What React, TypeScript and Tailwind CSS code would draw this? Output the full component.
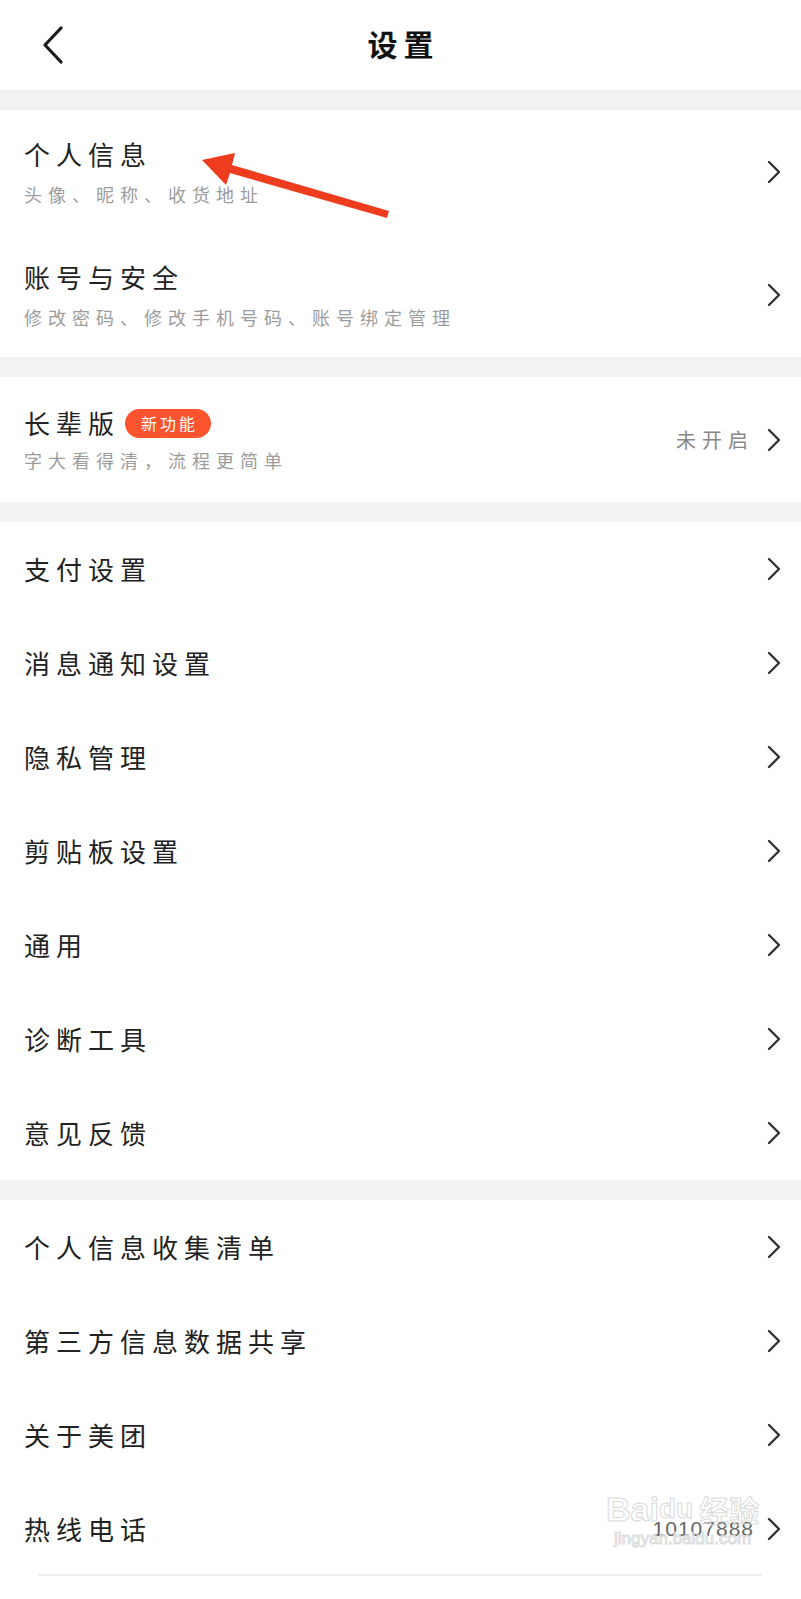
import React from 'react'

const font = "font-['Noto_Sans_CJK_SC','Noto_Sans',sans-serif]"

const Chevron = () => (
  <svg width="16" height="24" viewBox="0 0 16 24" fill="none" className="shrink-0">
    <path d="M3 2 L13 12 L3 22" stroke="#333" strokeWidth="2.4" strokeLinecap="round" strokeLinejoin="round" />
  </svg>
)

const Gap = () => <div className="h-[20px] bg-[#f3f3f3]" />

const Row = ({ title, right }: { title: string; right?: React.ReactNode }) => (
  <div className="h-[94px] flex items-center justify-between pl-[24px] pr-[19px]">
    <span className="text-[26px] leading-[26px] tracking-[6px] text-[#222]">{title}</span>
    <div className="flex items-center gap-3">
      {right}
      <Chevron />
    </div>
  </div>
)

const DetailRow = ({
  title,
  sub,
  badge,
  right,
  h,
  gap,
}: {
  title: string
  sub: string
  badge?: string
  right?: string
  h: string
  gap: string
}) => (
  <div className={`${h} flex items-center justify-between pl-[24px] pr-[19px]`}>
    <div className={`flex flex-col ${gap}`}>
      <div className="flex items-center h-[26px]">
        <span className="text-[26px] leading-[26px] tracking-[6px] text-[#222]">{title}</span>
        {badge && (
          <span className="h-[29px] pl-[16px] pr-[13px] ml-[5px] rounded-full bg-[#fd5430] text-white text-[16px] leading-[29px] tracking-[3px]">
            {badge}
          </span>
        )}
      </div>
      <span className="text-[18px] leading-[18px] tracking-[6px] text-[#9c9c9c]">{sub}</span>
    </div>
    <div className="flex items-center gap-3">
      {right && <span className="text-[20px] tracking-[6px] text-[#888]">{right}</span>}
      <Chevron />
    </div>
  </div>
)

const App = () => {
  const generalItems = ['支付设置', '消息通知设置', '隐私管理', '剪贴板设置', '通用', '诊断工具', '意见反馈']

  return (
    <div className={`relative w-[801px] h-[1599px] overflow-hidden bg-white ${font}`}>
      {/* header */}
      <div className="h-[90px] flex items-center relative">
        <div className="pl-[42px]">
          <svg width="22" height="38" viewBox="0 0 22 38" fill="none">
            <path d="M19 2 L3 19 L19 36" stroke="#1a1a1a" strokeWidth="3.2" strokeLinecap="round" strokeLinejoin="round" />
          </svg>
        </div>
        <div className="flex-1 flex justify-center -ml-[64px] -mt-[4px]">
          <span className="text-[30px] font-bold tracking-[6px] text-[#111] pl-[6px]">设置</span>
        </div>
      </div>
      <Gap />

      <DetailRow h="h-[123px]" gap="gap-[18px]" title="个人信息" sub="头像、昵称、收货地址" />
      <DetailRow h="h-[124px]" gap="gap-[18px]" title="账号与安全" sub="修改密码、修改手机号码、账号绑定管理" />
      <Gap />

      <DetailRow h="h-[125px]" gap="gap-[15px]" title="长辈版" badge="新功能" sub="字大看得清，流程更简单" right="未开启" />
      <Gap />

      {generalItems.map((t) => (
        <Row key={t} title={t} />
      ))}
      <Gap />

      <Row title="个人信息收集清单" />
      <Row title="第三方信息数据共享" />
      <Row title="关于美团" />
      <Row
        title="热线电话"
        right={
          <span className="font-['Liberation_Sans',sans-serif] text-[21px] tracking-[1px] text-[#666]">10107888</span>
        }
      />
      <div className="ml-[38px] mr-[39px] h-[2px] bg-[#eeeeee] -mt-[2px]" />

      {/* red arrow annotation */}
      <svg className="absolute left-0 top-0 pointer-events-none" width="801" height="300">
        <polygon
          points="202,160 235,153 232,165 389,211 387,218 230,173 226,185"
          fill="#ee3d1e"
        />
      </svg>

      {/* watermark */}
      <div className="absolute left-[606px] top-[1490px] flex flex-col items-center pointer-events-none">
        <div className="flex items-end text-transparent [-webkit-text-stroke:1px_#dadada] font-['Liberation_Sans',sans-serif] text-[34px] leading-[38px] font-bold">
          <span>Bai</span>
          <span className="text-[28px]">du</span>
          <span className="ml-[6px] font-['Noto_Sans_CJK_SC',sans-serif] text-[30px]">经验</span>
        </div>
        <span className="text-transparent [-webkit-text-stroke:1px_#dadada] font-['Liberation_Sans',sans-serif] text-[17px] leading-[22px]">
          jingyan.baidu.com
        </span>
      </div>
    </div>
  )
}

export default App
